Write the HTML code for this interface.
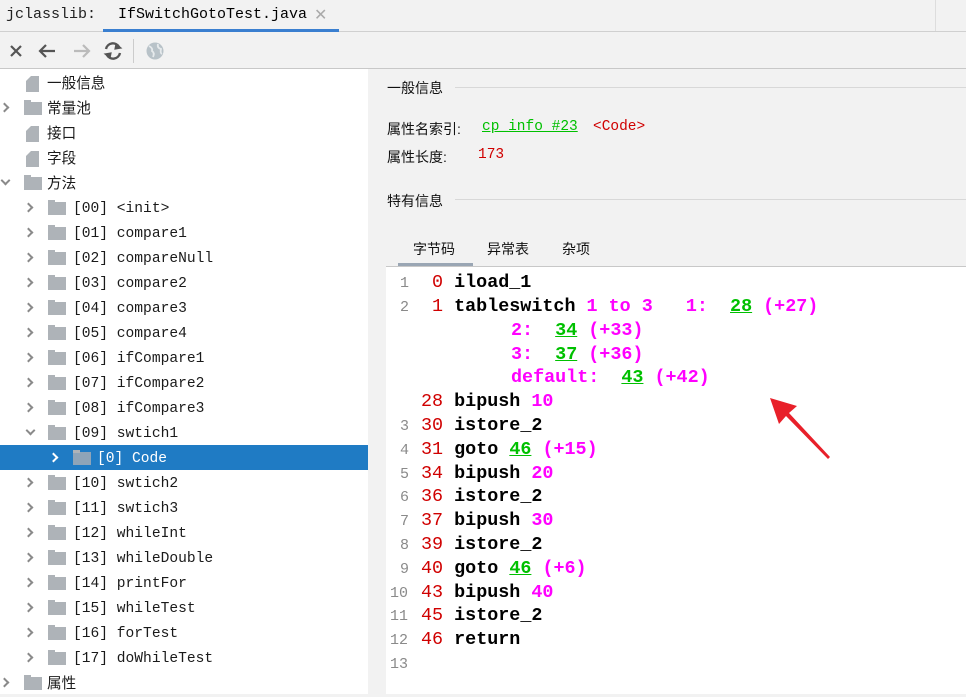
<!DOCTYPE html>
<html><head><meta charset="utf-8"><style>
*{margin:0;padding:0;box-sizing:border-box}
body{width:966px;height:694px;overflow:hidden;background:#f2f2f2;font-family:"Liberation Sans","Noto Sans CJK SC",sans-serif;position:relative}
.abs{position:absolute}
.mono{font-family:"Liberation Mono","Noto Sans CJK SC",monospace}
.row{position:absolute;left:0;width:368px;height:25px;font-size:14.6px;color:#1a1a1a;line-height:26px;white-space:pre}
.row .t{position:absolute}
.chev{position:absolute;top:8px;width:7px;height:7px;border-right:2px solid #8a8a8a;border-bottom:2px solid #8a8a8a;transform:rotate(-45deg)}
.chev.d{transform:rotate(45deg);top:6px}
.fold{position:absolute;top:6px;width:18px;height:13px;background:#aeb3b8}
.fold:before{content:"";position:absolute;left:0;top:-2px;width:7px;height:3px;background:#aeb3b8}
.file{position:absolute;top:5px;width:13px;height:16px;background:#aeb3b8;clip-path:polygon(5px 0,100% 0,100% 100%,0 100%,0 5px)}
.code{position:absolute;left:386px;top:267px;width:580px;height:427px;background:#fff}
.ln{position:absolute;height:24px;line-height:24px;font-size:18.4px;white-space:pre;font-family:"Liberation Mono",monospace}
.n{color:#8a8a8a;font-weight:normal;font-size:15px}
.o{color:#d00000;font-weight:normal}
.k{color:#000;font-weight:bold}
.m{color:#f0f;font-weight:bold}
.g{color:#00c000;font-weight:bold;text-decoration:underline}
</style></head><body>
<!-- tab bar -->
<div class="abs" style="left:0;top:0;width:966px;height:32px;background:#f2f2f2;border-bottom:1px solid #d0d0d0"></div>
<div class="abs mono" style="left:6px;top:6px;font-size:15px;color:#222">jclasslib:</div>
<div class="abs mono" style="left:118px;top:6px;font-size:15px;color:#000">IfSwitchGotoTest.java</div>
<div class="abs" style="left:314px;top:5px;font-size:16px;color:#aaa">✕</div>
<div class="abs" style="left:103px;top:29px;width:236px;height:3px;background:#3a7fd0"></div>
<div class="abs" style="left:935px;top:0;width:1px;height:31px;background:#ddd"></div>
<!-- toolbar -->
<div class="abs" style="left:0;top:32px;width:966px;height:37px;background:#f2f2f2;border-bottom:1px solid #c8c8c8"></div>
<svg class="abs" style="left:0;top:32px" width="180" height="37" viewBox="0 0 180 37">
<path d="M11 14 L21 24 M21 14 L11 24" stroke="#555" stroke-width="2.2" fill="none"/>
<path d="M40 19 H55 M46 13 L40 19 L46 25" stroke="#555" stroke-width="2.2" fill="none"/>
<path d="M74 19 H89 M83 13 L89 19 L83 25" stroke="#bbb" stroke-width="2.2" fill="none"/>
<path d="M106 17 A7 7 0 0 1 119 15" stroke="#555" stroke-width="2.4" fill="none"/>
<path d="M120 21 A7 7 0 0 1 107 23" stroke="#555" stroke-width="2.4" fill="none"/>
<path d="M116 12 L121 16 L115 17 Z M110 26 L105 22 L111 21 Z" fill="#555" stroke="#555" stroke-width="1.2"/>
<rect x="133" y="7" width="1" height="24" fill="#ccc"/>
<circle cx="155" cy="19" r="8.5" fill="#b8c2c8"/>
<path d="M149 14 Q153 16 152 19 Q155 21 153 25 M158 12 Q157 16 161 17 Q160 21 162 22" stroke="#e6eaec" stroke-width="1.8" fill="none"/>
</svg>
<!-- left panel -->
<div class="abs" style="left:0;top:69px;width:368px;height:625px;background:#fff"></div>
<div class="abs" style="left:0;top:445px;width:368px;height:25px;background:#1f7bc4"></div>

<div class="row" style="top:71px"><div class="file" style="left:26px"></div><span class="t" style="left:47px">一般信息</span></div>
<div class="row" style="top:96px"><div class="chev" style="left:1px"></div><div class="fold" style="left:24px"></div><span class="t" style="left:47px">常量池</span></div>
<div class="row" style="top:121px"><div class="file" style="left:26px"></div><span class="t" style="left:47px">接口</span></div>
<div class="row" style="top:146px"><div class="file" style="left:26px"></div><span class="t" style="left:47px">字段</span></div>
<div class="row" style="top:171px"><div class="chev d" style="left:2px"></div><div class="fold" style="left:24px"></div><span class="t" style="left:47px">方法</span></div>

<div class="row mono" style="top:196px"><div class="chev" style="left:25px"></div><div class="fold" style="left:48px"></div><span class="t" style="left:73px">[00] &lt;init&gt;</span></div>
<div class="row mono" style="top:221px"><div class="chev" style="left:25px"></div><div class="fold" style="left:48px"></div><span class="t" style="left:73px">[01] compare1</span></div>
<div class="row mono" style="top:246px"><div class="chev" style="left:25px"></div><div class="fold" style="left:48px"></div><span class="t" style="left:73px">[02] compareNull</span></div>
<div class="row mono" style="top:271px"><div class="chev" style="left:25px"></div><div class="fold" style="left:48px"></div><span class="t" style="left:73px">[03] compare2</span></div>
<div class="row mono" style="top:296px"><div class="chev" style="left:25px"></div><div class="fold" style="left:48px"></div><span class="t" style="left:73px">[04] compare3</span></div>
<div class="row mono" style="top:321px"><div class="chev" style="left:25px"></div><div class="fold" style="left:48px"></div><span class="t" style="left:73px">[05] compare4</span></div>
<div class="row mono" style="top:346px"><div class="chev" style="left:25px"></div><div class="fold" style="left:48px"></div><span class="t" style="left:73px">[06] ifCompare1</span></div>
<div class="row mono" style="top:371px"><div class="chev" style="left:25px"></div><div class="fold" style="left:48px"></div><span class="t" style="left:73px">[07] ifCompare2</span></div>
<div class="row mono" style="top:396px"><div class="chev" style="left:25px"></div><div class="fold" style="left:48px"></div><span class="t" style="left:73px">[08] ifCompare3</span></div>
<div class="row mono" style="top:421px"><div class="chev d" style="left:27px"></div><div class="fold" style="left:48px"></div><span class="t" style="left:73px">[09] swtich1</span></div>
<div class="row mono" style="top:446px;color:#fff"><div class="chev" style="left:50px;border-color:#fff"></div><div class="fold" style="left:73px;background:#8ea4b8"></div><span class="t" style="left:97px">[0] Code</span></div>
<div class="row mono" style="top:471px"><div class="chev" style="left:25px"></div><div class="fold" style="left:48px"></div><span class="t" style="left:73px">[10] swtich2</span></div>
<div class="row mono" style="top:496px"><div class="chev" style="left:25px"></div><div class="fold" style="left:48px"></div><span class="t" style="left:73px">[11] swtich3</span></div>
<div class="row mono" style="top:521px"><div class="chev" style="left:25px"></div><div class="fold" style="left:48px"></div><span class="t" style="left:73px">[12] whileInt</span></div>
<div class="row mono" style="top:546px"><div class="chev" style="left:25px"></div><div class="fold" style="left:48px"></div><span class="t" style="left:73px">[13] whileDouble</span></div>
<div class="row mono" style="top:571px"><div class="chev" style="left:25px"></div><div class="fold" style="left:48px"></div><span class="t" style="left:73px">[14] printFor</span></div>
<div class="row mono" style="top:596px"><div class="chev" style="left:25px"></div><div class="fold" style="left:48px"></div><span class="t" style="left:73px">[15] whileTest</span></div>
<div class="row mono" style="top:621px"><div class="chev" style="left:25px"></div><div class="fold" style="left:48px"></div><span class="t" style="left:73px">[16] forTest</span></div>
<div class="row mono" style="top:646px"><div class="chev" style="left:25px"></div><div class="fold" style="left:48px"></div><span class="t" style="left:73px">[17] doWhileTest</span></div>
<div class="row" style="top:671px"><div class="chev" style="left:1px"></div><div class="fold" style="left:24px"></div><span class="t" style="left:47px">属性</span></div>

<!-- right panel -->
<div class="abs" style="left:387px;top:78px;font-size:14px;color:#111">一般信息</div>
<div class="abs" style="left:455px;top:87px;width:511px;height:1px;background:#d8d8d8"></div>
<div class="abs" style="left:387px;top:119px;font-size:14px;color:#111">属性名索引:</div>
<div class="abs mono" style="left:482px;top:119px;font-size:14.5px;color:#00c000;text-decoration:underline">cp_info #23</div>
<div class="abs mono" style="left:593px;top:119px;font-size:14.5px;color:#d00000">&lt;Code&gt;</div>
<div class="abs" style="left:387px;top:147px;font-size:14px;color:#111">属性长度:</div>
<div class="abs mono" style="left:478px;top:147px;font-size:14.5px;color:#d00000">173</div>
<div class="abs" style="left:387px;top:191px;font-size:14px;color:#111">特有信息</div>
<div class="abs" style="left:455px;top:199px;width:511px;height:1px;background:#d8d8d8"></div>
<div class="abs" style="left:413px;top:239px;font-size:14px;color:#111">字节码</div>
<div class="abs" style="left:487px;top:239px;font-size:14px;color:#111">异常表</div>
<div class="abs" style="left:562px;top:239px;font-size:14px;color:#111">杂项</div>
<div class="abs" style="left:398px;top:263px;width:75px;height:3px;background:#9aa6b4"></div>
<div class="abs" style="left:386px;top:266px;width:580px;height:1px;background:#c8c8c8"></div>
<div class="code"></div>

<div class="ln" style="top:271px;left:400px"><span class="n">1</span></div><div class="ln" style="top:271px;left:432px"><span class="o">0</span> <span class="k">iload_1</span></div>
<div class="ln" style="top:295px;left:400px"><span class="n">2</span></div><div class="ln" style="top:295px;left:432px"><span class="o">1</span> <span class="k">tableswitch</span> <span class="m">1 to 3   1:  </span><span class="g">28</span><span class="m"> (+27)</span></div>
<div class="ln" style="top:319px;left:511px"><span class="m">2:  </span><span class="g">34</span><span class="m"> (+33)</span></div>
<div class="ln" style="top:343px;left:511px"><span class="m">3:  </span><span class="g">37</span><span class="m"> (+36)</span></div>
<div class="ln" style="top:366px;left:511px"><span class="m">default:  </span><span class="g">43</span><span class="m"> (+42)</span></div>
<div class="ln" style="top:390px;left:421px"><span class="o">28</span> <span class="k">bipush</span> <span class="m">10</span></div>
<div class="ln" style="top:414px;left:400px"><span class="n">3</span></div><div class="ln" style="top:414px;left:421px"><span class="o">30</span> <span class="k">istore_2</span></div>
<div class="ln" style="top:438px;left:400px"><span class="n">4</span></div><div class="ln" style="top:438px;left:421px"><span class="o">31</span> <span class="k">goto</span> <span class="g">46</span><span class="m"> (+15)</span></div>
<div class="ln" style="top:462px;left:400px"><span class="n">5</span></div><div class="ln" style="top:462px;left:421px"><span class="o">34</span> <span class="k">bipush</span> <span class="m">20</span></div>
<div class="ln" style="top:485px;left:400px"><span class="n">6</span></div><div class="ln" style="top:485px;left:421px"><span class="o">36</span> <span class="k">istore_2</span></div>
<div class="ln" style="top:509px;left:400px"><span class="n">7</span></div><div class="ln" style="top:509px;left:421px"><span class="o">37</span> <span class="k">bipush</span> <span class="m">30</span></div>
<div class="ln" style="top:533px;left:400px"><span class="n">8</span></div><div class="ln" style="top:533px;left:421px"><span class="o">39</span> <span class="k">istore_2</span></div>
<div class="ln" style="top:557px;left:400px"><span class="n">9</span></div><div class="ln" style="top:557px;left:421px"><span class="o">40</span> <span class="k">goto</span> <span class="g">46</span><span class="m"> (+6)</span></div>
<div class="ln" style="top:581px;left:390px"><span class="n">10</span></div><div class="ln" style="top:581px;left:421px"><span class="o">43</span> <span class="k">bipush</span> <span class="m">40</span></div>
<div class="ln" style="top:604px;left:390px"><span class="n">11</span></div><div class="ln" style="top:604px;left:421px"><span class="o">45</span> <span class="k">istore_2</span></div>
<div class="ln" style="top:628px;left:390px"><span class="n">12</span></div><div class="ln" style="top:628px;left:421px"><span class="o">46</span> <span class="k">return</span></div>
<div class="ln" style="top:652px;left:390px"><span class="n">13</span></div>

<!-- arrow -->
<svg class="abs" style="left:760px;top:390px" width="80" height="80" viewBox="0 0 80 80">
<polygon points="10,8 37,16 29,23 70,67 68,69 26,26 19,34" fill="#e8202a"/>
</svg>
</body></html>
